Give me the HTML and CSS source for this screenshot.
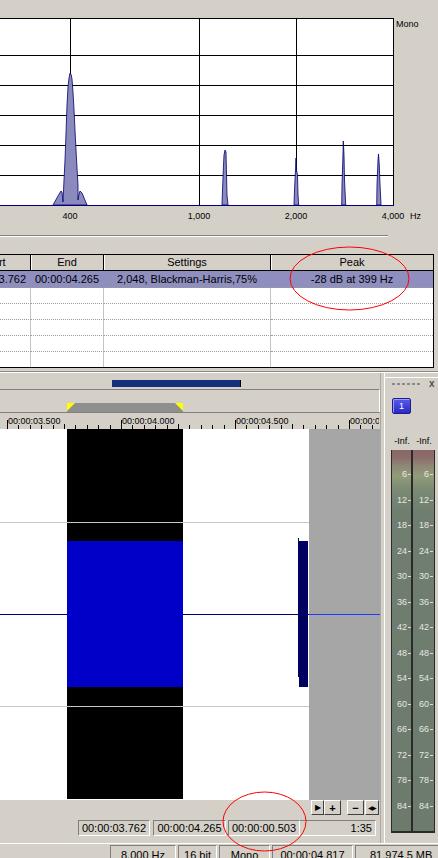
FILE: index.html
```html
<!DOCTYPE html>
<html>
<head>
<meta charset="utf-8">
<link rel="stylesheet" href="styles.css">
</head>
<body>
<div class="page">
  <section class="spectrum">
    <svg class="spec-svg" width="438" height="232" viewBox="0 0 438 232">
      <rect x="0" y="18" width="393" height="187" fill="#fff"/>
      <g fill="#000" shape-rendering="crispEdges">
        <rect x="0" y="18" width="394" height="1"/>
        <rect x="0" y="55" width="393" height="1"/>
        <rect x="0" y="85" width="393" height="1"/>
        <rect x="0" y="115" width="393" height="1"/>
        <rect x="0" y="145" width="393" height="1"/>
        <rect x="0" y="175" width="393" height="1"/>
        <rect x="70" y="18" width="1" height="187"/>
        <rect x="199" y="18" width="1" height="187"/>
        <rect x="296" y="18" width="1" height="187"/>
        <rect x="393" y="18" width="1" height="188"/>
      </g>
      <g fill="#8a8abf" stroke="#00006a" stroke-width="0.8" stroke-linejoin="round">
        <polygon points="53,205 58,196 61,191 62,192 63,202 64,180 65,160 66,133 67,105 68,87 69,78 70,73 71,74 72,79 73,92 74,110 75,130 76,150 77,168 78,185 78,200 79,194 80,191 82,193 87,205"/>
        <polygon points="222,205 222.5,190 223.5,165 224,155 225,150 226,152 226.5,175 227,195 228,205"/>
        <polygon points="294,205 294.5,190 295.5,170 296,158 296.5,170 297.5,175 298,195 298.7,205"/>
        <polygon points="341.7,205 342,185 342.8,160 343.3,141 344,155 344.5,180 345.7,205"/>
        <polygon points="376.7,205 377,185 378,160 378.5,154 379.3,165 379.8,180 381,205"/>
      </g>
      <rect x="0" y="205" width="394" height="1" fill="#000080" shape-rendering="crispEdges"/>
      <text class="lbl" x="396" y="27">Mono</text>
      <text class="lbl" x="70" y="219" text-anchor="middle">400</text>
      <text class="lbl" x="199" y="219" text-anchor="middle">1,000</text>
      <text class="lbl" x="296" y="219" text-anchor="middle">2,000</text>
      <text class="lbl" x="393" y="219" text-anchor="middle">4,000</text>
      <text class="lbl" x="410" y="219">Hz</text>
    </svg>
  </section>

  <div class="hscroll"></div>

  <div class="table-wrap">
    <div class="grid">
      <div class="th">Start</div>
      <div class="th">End</div>
      <div class="th">Settings</div>
      <div class="th last">Peak</div>

      <div class="td sel first">00:00:03.762</div>
      <div class="td sel first">00:00:04.265</div>
      <div class="td sel first">2,048, Blackman-Harris,75%</div>
      <div class="td sel first last">-28 dB at 399 Hz</div>

      <div class="td"></div><div class="td"></div><div class="td"></div><div class="td last"></div>
      <div class="td"></div><div class="td"></div><div class="td"></div><div class="td last"></div>
      <div class="td"></div><div class="td"></div><div class="td"></div><div class="td last"></div>
      <div class="td"></div><div class="td"></div><div class="td"></div><div class="td last"></div>
      <div class="td end"></div><div class="td end"></div><div class="td end"></div><div class="td end last"></div>
    </div>
  </div>

  <div class="dw-edge"></div>

  <div class="datawin">
    <div class="main">
      <div class="overview"><div class="ov-bar"></div></div>
      <div class="selbox">
        <div class="selbar"><span class="tri tri-l"></span><span class="tri tri-r"></span></div>
      </div>
      <svg class="ruler" width="380" height="17" viewBox="0 0 380 17">
        <defs><clipPath id="rc"><rect x="0" y="0" width="379" height="17"/></clipPath></defs>
        <rect x="0" y="0" width="380" height="1" fill="#808080" shape-rendering="crispEdges"/>
        <g fill="#000" shape-rendering="crispEdges">
          <rect x="7" y="8" width="1" height="9"/>
          <rect x="121" y="8" width="1" height="9"/>
          <rect x="235" y="8" width="1" height="9"/>
          <rect x="349" y="8" width="1" height="9"/>
          <rect x="18" y="13" width="1" height="4"/><rect x="30" y="13" width="1" height="4"/>
          <rect x="41" y="13" width="1" height="4"/><rect x="53" y="13" width="1" height="4"/>
          <rect x="64" y="12" width="1" height="5"/><rect x="75" y="13" width="1" height="4"/>
          <rect x="87" y="13" width="1" height="4"/><rect x="98" y="13" width="1" height="4"/>
          <rect x="110" y="13" width="1" height="4"/>
          <rect x="132" y="13" width="1" height="4"/><rect x="144" y="13" width="1" height="4"/>
          <rect x="155" y="13" width="1" height="4"/><rect x="167" y="13" width="1" height="4"/>
          <rect x="178" y="12" width="1" height="5"/><rect x="189" y="13" width="1" height="4"/>
          <rect x="201" y="13" width="1" height="4"/><rect x="212" y="13" width="1" height="4"/>
          <rect x="224" y="13" width="1" height="4"/>
          <rect x="246" y="13" width="1" height="4"/><rect x="258" y="13" width="1" height="4"/>
          <rect x="269" y="13" width="1" height="4"/><rect x="281" y="13" width="1" height="4"/>
          <rect x="292" y="12" width="1" height="5"/><rect x="303" y="13" width="1" height="4"/>
          <rect x="315" y="13" width="1" height="4"/><rect x="326" y="13" width="1" height="4"/>
          <rect x="338" y="13" width="1" height="4"/>
          <rect x="360" y="13" width="1" height="4"/><rect x="372" y="13" width="1" height="4"/>
        </g>
        <g clip-path="url(#rc)">
          <text class="rlbl" x="8" y="12">00:00:03.500</text>
          <text class="rlbl" x="122" y="12">00:00:04.000</text>
          <text class="rlbl" x="236" y="12">00:00:04.500</text>
          <text class="rlbl" x="350" y="12">00:00:05.000</text>
        </g>
      </svg>
      <svg class="wave" width="380" height="371" viewBox="0 0 380 371" shape-rendering="crispEdges">
        <rect x="0" y="0" width="309" height="371" fill="#fff"/>
        <rect x="309" y="0" width="71" height="371" fill="#a6a6a6"/>
        <rect x="0" y="93" width="309" height="1" fill="#c8c8c8"/>
        <rect x="0" y="277" width="309" height="1" fill="#c8c8c8"/>
        <rect x="67" y="0" width="116" height="370" fill="#000"/>
        <rect x="67" y="93" width="116" height="1" fill="#c8c8c8"/>
        <rect x="67" y="277" width="116" height="1" fill="#c8c8c8"/>
        <rect x="67" y="112" width="116" height="146" fill="#0000c8"/>
        <rect x="0" y="185" width="67" height="1" fill="#000080"/>
        <rect x="183" y="185" width="126" height="1" fill="#000080"/>
        <rect x="309" y="185" width="71" height="1" fill="#1a3cff"/>
        <rect x="298" y="109" width="1" height="139" fill="#000060"/>
        <rect x="299" y="112" width="9" height="146" fill="#000060"/>
      </svg>
      <div class="btnrow">
        <span class="btn b1">&#9654;</span>
        <span class="btn b2">+</span>
        <span class="btn b3">&#8722;</span>
        <span class="btn b4">&#9664;&#9654;</span>
      </div>
      <div class="fields">
        <div class="fld f1">00:00:03.762</div>
        <div class="fld f2">00:00:04.265</div>
        <div class="fld f3">00:00:00.503</div>
        <div class="fld f4">1:35</div>
      </div>
    </div>
    <div class="vsep"></div>
    <div class="side">
      <div class="side-inner">
        <div class="side-head"><span class="grip"></span><span class="close">x</span></div>
        <div class="chan-btn">1</div>
        <div class="inf-row"><span class="inf">-Inf.</span><span class="inf">-Inf.</span></div>
        <svg class="meters" width="44" height="383" viewBox="0 0 44 383">
          <defs>
            <linearGradient id="mg" x1="0" y1="0" x2="0" y2="1">
              <stop offset="0" stop-color="#8b6868"/>
              <stop offset="0.018" stop-color="#8c6b69"/>
              <stop offset="0.045" stop-color="#8f8b76"/>
              <stop offset="0.068" stop-color="#919c78"/>
              <stop offset="0.1" stop-color="#7c8b73"/>
              <stop offset="0.16" stop-color="#6f7e6f"/>
              <stop offset="1" stop-color="#6c7b6c"/>
            </linearGradient>
          </defs>
          <rect x="0" y="0" width="21" height="383" fill="url(#mg)"/>
          <rect x="22" y="0" width="22" height="383" fill="url(#mg)"/>
          <g fill="#2a2a2a" shape-rendering="crispEdges">
            <rect x="0" y="0" width="1" height="383"/>
            <rect x="20" y="0" width="2" height="383"/>
            <rect x="43" y="0" width="1" height="383"/>
            <rect x="0" y="381" width="44" height="2"/>
          </g>
          <g class="mticks" fill="#dcdcdc" shape-rendering="crispEdges">
            <path d="M17 24h3v1h-3zM17 49.5h3v1h-3zM17 75h3v1h-3zM17 100.5h3v1h-3zM17 126h3v1h-3zM17 151.5h3v1h-3zM17 177h3v1h-3zM17 202.5h3v1h-3zM17 228h3v1h-3zM17 253.5h3v1h-3zM17 279h3v1h-3zM17 304.5h3v1h-3zM17 330h3v1h-3zM17 355.5h3v1h-3z"/>
            <path d="M39 24h3v1h-3zM39 49.5h3v1h-3zM39 75h3v1h-3zM39 100.5h3v1h-3zM39 126h3v1h-3zM39 151.5h3v1h-3zM39 177h3v1h-3zM39 202.5h3v1h-3zM39 228h3v1h-3zM39 253.5h3v1h-3zM39 279h3v1h-3zM39 304.5h3v1h-3zM39 330h3v1h-3zM39 355.5h3v1h-3z"/>
          </g>
          <g class="mnum" text-anchor="end">
            <text x="16" y="27">6</text><text x="38" y="27">6</text>
            <text x="16" y="52.5">12</text><text x="38" y="52.5">12</text>
            <text x="16" y="78">18</text><text x="38" y="78">18</text>
            <text x="16" y="103.5">24</text><text x="38" y="103.5">24</text>
            <text x="16" y="129">30</text><text x="38" y="129">30</text>
            <text x="16" y="154.5">36</text><text x="38" y="154.5">36</text>
            <text x="16" y="180">42</text><text x="38" y="180">42</text>
            <text x="16" y="205.5">48</text><text x="38" y="205.5">48</text>
            <text x="16" y="231">54</text><text x="38" y="231">54</text>
            <text x="16" y="256.5">60</text><text x="38" y="256.5">60</text>
            <text x="16" y="282">66</text><text x="38" y="282">66</text>
            <text x="16" y="307.5">72</text><text x="38" y="307.5">72</text>
            <text x="16" y="333">78</text><text x="38" y="333">78</text>
            <text x="16" y="358.5">84</text><text x="38" y="358.5">84</text>
          </g>
        </svg>
      </div>
    </div>
  </div>

  <div class="statusbar">
    <div class="sb s1">8,000 Hz</div>
    <div class="sb s2">16 bit</div>
    <div class="sb s3">Mono</div>
    <div class="sb s4">00:00:04.817</div>
    <div class="sb s5">81,974.5 MB</div>
  </div>

  <svg class="annot" width="438" height="858" viewBox="0 0 438 858">
    <ellipse cx="349.5" cy="278.5" rx="59.5" ry="31.5" fill="none" stroke="#ff0000" stroke-width="1"/>
    <ellipse cx="264.5" cy="821.5" rx="41.5" ry="29.5" fill="none" stroke="#ff0000" stroke-width="1"/>
  </svg>
</div>
</body>
</html>
```

FILE: styles.css
```css
* { box-sizing: border-box; }
html, body { margin: 0; padding: 0; }
body {
  width: 438px;
  height: 858px;
  overflow: hidden;
  background: #d4d0c8;
  font-family: "Liberation Sans", Arial, sans-serif;
  font-size: 11px;
  color: #000;
}
.page { position: relative; width: 438px; height: 858px; overflow: hidden; }

/* spectrum */
.spectrum { height: 232px; }
.spec-svg { display: block; }
.lbl { font-family: "Liberation Sans", Arial, sans-serif; font-size: 9px; fill: #000; }

.hscroll {
  width: 388px;
  height: 2px;
  margin-top: 3px;
  margin-bottom: 17px;
  border-top: 1px solid #808080;
  border-bottom: 1px solid #fff;
}

/* table */
.table-wrap { width: 438px; height: 116px; overflow: hidden; }
.grid {
  margin-left: -42px;
  width: 476px;
  display: grid;
  grid-template-columns: 73px 73px 167px 162px;
  border-top: 1px solid #000;
  border-bottom: 1px solid #000;
  border-right: 1px solid #000;
  background: #fff;
}
.th {
  height: 16px;
  line-height: 15px;
  text-align: center;
  background: #d4d0c8;
  border-bottom: 1px solid #000;
  border-right: 1px solid #000;
  box-shadow: inset 1px 0 0 #fff;
  white-space: nowrap;
}
.td {
  height: 16px;
  line-height: 15px;
  text-align: center;
  white-space: nowrap;
  overflow: hidden;
  border-right: 1px solid #c4c4c4;
  border-bottom: 1px dotted #9a9a9a;
}
.td.first { height: 17px; line-height: 16px; }
.td.end { height: 15px; border-bottom: none; }
.th.last, .td.last { border-right: none; }
.td.sel { background: #8e8ebf; border-right-color: #8e8ebf; }

.dw-edge {
  height: 2px;
  margin-top: 1px;
  border-top: 1px solid #8a8a8a;
  border-bottom: 1px solid #fff;
}

/* data window */
.datawin { display: flex; height: 470px; }
.main { width: 380px; display: flex; flex-direction: column; }
.overview { height: 16px; padding: 7px 0 0 112px; }
.ov-bar { width: 129px; height: 7px; background: #14307c; border-right: 1px solid #000; }
.selbox {
  height: 23px;
  border-top: 1px solid #808080;
  border-right: 1px solid #fff;
  padding: 13px 0 0 67px;
}
.selbar { position: relative; width: 116px; height: 9px; background: #8f8f8f; }
.tri { position: absolute; top: 0; width: 0; height: 0; border-top: 8px solid #ffff00; }
.tri-l { left: 0; border-right: 8px solid transparent; }
.tri-r { right: 0; border-left: 8px solid transparent; }
.ruler { display: block; }
.rlbl { font-family: "Liberation Sans", Arial, sans-serif; font-size: 9px; fill: #000; }
.wave { display: block; }

.btnrow { height: 15px; display: flex; padding-left: 311px; }
.btn {
  height: 15px;
  display: flex;
  align-items: center;
  justify-content: center;
  font-size: 8px;
  border: 1px solid;
  border-color: #fff #404040 #404040 #fff;
  background: #d4d0c8;
}
.b1 { width: 13px; }
.b2 { width: 17px; }
.b3 { width: 17px; margin-left: 6px; font-size: 11px; font-weight: bold; }
.b4 { width: 14px; margin-left: 1px; font-size: 6px; letter-spacing: -1px; }
.b2 { font-size: 11px; font-weight: bold; }

.fields { height: 20px; margin-top: 3px; display: flex; padding: 2px 0 0 78px; }
.fld {
  height: 16px;
  line-height: 14px;
  text-align: center;
  white-space: nowrap;
  border: 1px solid;
  border-color: #808080 #fff #fff #808080;
}
.f1 { width: 72px; }
.f2 { width: 73px; margin-left: 3px; }
.f3 { width: 72px; margin-left: 2px; }
.f4 { width: 76px; text-align: right; padding-right: 3px; border-left: none; }

.vsep { width: 5px; border-left: 1px solid #a8a8a8; border-right: 1px solid #fff; }
.side { flex: 1; padding-top: 4px; }
.side-inner { border-top: 1px solid #fff; height: 100%; }
.side-head { height: 12px; display: flex; align-items: center; padding-left: 7px; }
.grip {
  width: 28px;
  height: 2px;
  background: repeating-linear-gradient(90deg, #8a8a8a 0 3px, transparent 3px 5px);
}
.close { margin-left: 9px; font-size: 10px; font-weight: bold; color: #505050; line-height: 10px; }
.chan-btn {
  width: 19px;
  height: 16px;
  margin: 8px 0 0 7px;
  background: linear-gradient(#5a5ae8, #2a2ac8);
  border: 1px solid #1c1c8c;
  border-radius: 2px;
  box-shadow: inset 1px 1px 0 #9a9aff;
  color: #fff;
  font-size: 9px;
  line-height: 14px;
  text-align: center;
}
.inf-row { display: flex; margin: 22px 0 0 6px; height: 11px; }
.inf { width: 22px; text-align: center; font-size: 9px; line-height: 11px; }
.meters { display: block; margin: 3px 0 0 6px; }
.mnum text { font-family: "Liberation Sans", Arial, sans-serif; font-size: 9px; fill: #e6e6e6; }

/* status bar */
.statusbar { height: 15px; border-top: 1px solid #fff; display: flex; padding: 1px 0 0 110px; }
.sb {
  height: 16px;
  margin-right: 2px;
  padding-top: 3px;
  line-height: 13px;
  text-align: center;
  white-space: nowrap;
  flex: none;
  border: 1px solid;
  border-color: #808080 #fff #fff #808080;
}
.s1 { width: 66px; }
.s2 { width: 39px; }
.s3 { width: 51px; }
.s4 { width: 81px; }
.s5 { width: 90px; text-align: left; padding-left: 14px; }

.annot { position: absolute; left: 0; top: 0; pointer-events: none; }
```
